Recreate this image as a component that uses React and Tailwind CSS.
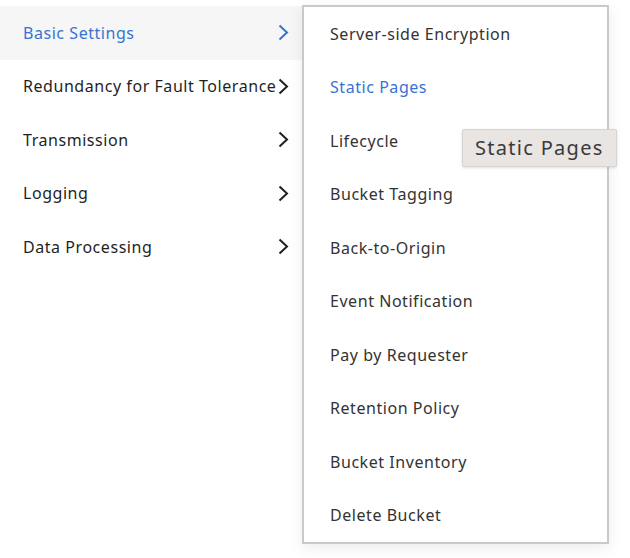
import React from "react";

const mainItems = [
  "Basic Settings",
  "Redundancy for Fault Tolerance",
  "Transmission",
  "Logging",
  "Data Processing",
];

const subItems = [
  "Server-side Encryption",
  "Static Pages",
  "Lifecycle",
  "Bucket Tagging",
  "Back-to-Origin",
  "Event Notification",
  "Pay by Requester",
  "Retention Policy",
  "Bucket Inventory",
  "Delete Bucket",
];

const Chevron = ({ active }) => (
  <svg width="11" height="17" viewBox="0 0 11 17" className="shrink-0">
    <polyline
      points="1.5,1.5 9,8.5 1.5,15.5"
      fill="none"
      stroke={active ? "#3574d4" : "#1f1f1f"}
      strokeWidth="2"
    />
  </svg>
);

const App = () => {
  return (
    <div
      className="relative w-[630px] h-[558px] bg-white flex overflow-hidden"
      style={{ fontFamily: '"Noto Sans", "Liberation Sans", sans-serif' }}
    >
      {/* main menu */}
      <div className="w-[302px] pt-[6px] flex flex-col">
        {mainItems.map((item, i) => (
          <div
            key={item}
            className={`h-[53.5px] flex items-center justify-between pl-[23px] pr-[13px] text-[16px] tracking-[0.55px] ${
              i === 0 ? "bg-[#f6f6f6] text-[#3574d4]" : "text-[#1f1f1f]"
            }`}
          >
            <span className="whitespace-nowrap">{item}</span>
            <Chevron active={i === 0} />
          </div>
        ))}
      </div>

      {/* sub menu */}
      <div className="mt-[5px] w-[307px] h-[539px] border-2 border-[#c9c9c9] bg-white shadow-[0_4px_14px_rgba(0,0,0,0.08)] flex flex-col">
        {subItems.map((item, i) => (
          <div
            key={item}
            className={`h-[53.5px] flex items-center pl-[26px] text-[16px] tracking-[0.55px] ${
              i === 1 ? "text-[#3574d4]" : "text-[#333333]"
            }`}
          >
            {item}
          </div>
        ))}
      </div>

      {/* tooltip */}
      <div className="absolute left-[462px] top-[129px] w-[155px] h-[38px] flex items-center pl-[12px] bg-[#e8e5e3] border border-[#d6d3d1] rounded-[2px] shadow-[0_1px_3px_rgba(0,0,0,0.12)] text-[20px] tracking-[1.3px] text-[#3a3a3a]">
        Static Pages
      </div>
    </div>
  );
};

export default App;
